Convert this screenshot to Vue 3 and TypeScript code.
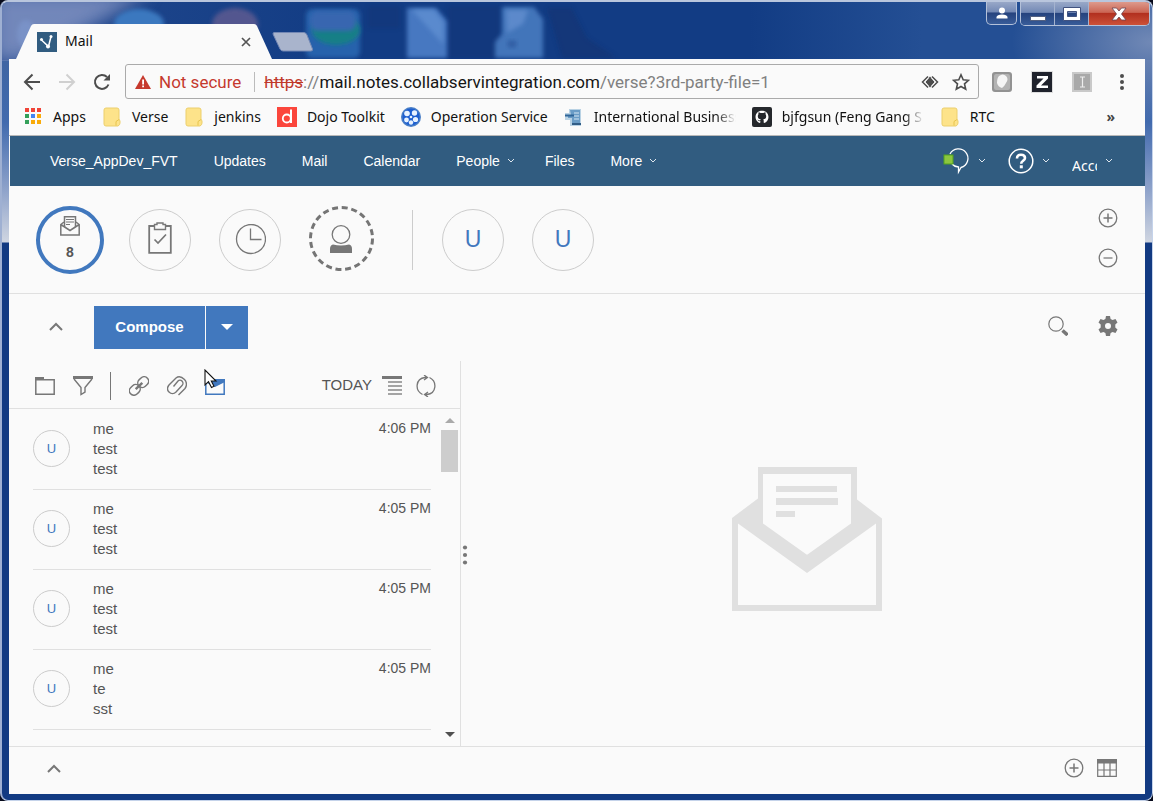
<script setup lang="ts">
interface Bookmark { label: string; icon: 'apps' | 'folder' | 'dojo' | 'reel' | 'server' | 'github'; faded?: boolean }
interface NavItem { label: string; menu?: boolean }
interface Message { id: number; sender: string; subject: string; snippet: string; time: string }

const bookmarks: Bookmark[] = [
  { label: 'Apps', icon: 'apps' },
  { label: 'Verse', icon: 'folder' },
  { label: 'jenkins', icon: 'folder' },
  { label: 'Dojo Toolkit', icon: 'dojo' },
  { label: 'Operation Service', icon: 'reel' },
  { label: 'International Business', icon: 'server', faded: true },
  { label: 'bjfgsun (Feng Gang S', icon: 'github', faded: true },
  { label: 'RTC', icon: 'folder' },
]
const appColors: string[] = ['#f04438', '#f04438', '#f04438', '#34a05a', '#4285f4', '#f9ab0a', '#34a05a', '#f9ab0a', '#f9ab0a']

const navItems: NavItem[] = [
  { label: 'Verse_AppDev_FVT' },
  { label: 'Updates' },
  { label: 'Mail' },
  { label: 'Calendar' },
  { label: 'People', menu: true },
  { label: 'Files' },
  { label: 'More', menu: true },
]

const messages: Message[] = [
  { id: 1, sender: 'me', subject: 'test', snippet: 'test', time: '4:06 PM' },
  { id: 2, sender: 'me', subject: 'test', snippet: 'test', time: '4:05 PM' },
  { id: 3, sender: 'me', subject: 'test', snippet: 'test', time: '4:05 PM' },
  { id: 4, sender: 'me', subject: 'te', snippet: 'sst', time: '4:05 PM' },
]
</script>

<template>
  <div class="window">
    <svg class="glass" width="740" height="59" viewBox="0 0 740 59" aria-hidden="true">
      <defs>
        <filter id="soft" x="-20%" y="-20%" width="140%" height="140%"><feGaussianBlur stdDeviation="2" /></filter>
        <filter id="softer" x="-40%" y="-40%" width="180%" height="180%"><feGaussianBlur stdDeviation="9" /></filter>
      </defs>
      <path d="M-10-10H150L80 30 20 59H-10z" fill="#8193c2" opacity=".85" filter="url(#softer)" />
      <ellipse cx="24" cy="32" rx="9" ry="14" fill="#7f9ad0" opacity=".6" filter="url(#soft)" />
      <ellipse cx="137" cy="22" rx="25" ry="15" fill="#3b78bf" filter="url(#soft)" />
      <ellipse cx="233" cy="22" rx="23" ry="16" fill="#53568f" filter="url(#soft)" />
      <rect x="304" y="7" width="54" height="49" rx="6" fill="#2862ac" filter="url(#soft)" />
      <ellipse cx="334" cy="28" rx="24" ry="15" fill="#167f86" filter="url(#soft)" />
      <rect x="308" y="9" width="46" height="20" rx="8" fill="#3766b0" filter="url(#soft)" />
      <path d="M366 4h32v22h-32zM446 4h52v52h-52z" fill="#17326f" opacity=".35" filter="url(#soft)" />
      <path d="M405 6h29l11 13v37h-40z" fill="#4678c1" filter="url(#soft)" />
      <path d="M410 8h22l9 12v22z" fill="#5a8ace" filter="url(#soft)" />
      <path d="M500 5h32l9 12v39h-48V40l7-8z" fill="#4274ba" filter="url(#soft)" />
      <path d="M504 8h22l-5 14-16 9z" fill="#5b89cb" filter="url(#soft)" />
      <ellipse cx="510" cy="42" rx="5" ry="4" fill="#315ea4" filter="url(#soft)" />
      <path d="M545 6h25l15 30 30 20h-55z" fill="#15306e" opacity=".5" filter="url(#soft)" />
    </svg>

    <header class="titlebar">
      <div class="tab">
        <svg class="tab-shape" viewBox="0 0 256 35" preserveAspectRatio="none" aria-hidden="true">
          <path d="M0 35 15 2Q16 0 18 0H238Q240 0 241 2L256 35z" fill="#fafafa" />
        </svg>
        <svg class="fav" width="20" height="20" viewBox="0 0 20 20" aria-hidden="true">
          <rect width="20" height="20" fill="#315c80" />
          <path d="M4.500 8 11.500 14.500 14 4.500" fill="none" stroke="#fff" stroke-width="1.500" />
          <circle cx="4.500" cy="7.500" r="1.500" fill="#fff" /><circle cx="11" cy="14.500" r="2" fill="#fff" /><circle cx="14" cy="4.500" r="1.500" fill="#fff" />
        </svg>
        <span class="tab-title">Mail</span>
        <button class="tab-close" aria-label="Close tab">
          <svg width="10" height="10" viewBox="0 0 10 10"><path d="M1 1l8 8M9 1 1 9" stroke="#555" stroke-width="1.700" /></svg>
        </button>
      </div>
      <button class="new-tab" aria-label="New tab">
        <svg width="42" height="20" viewBox="0 0 42 20"><path d="M2 .5H32Q34 .5 35 3L40.500 17Q41 19 39 19H11Q9 19 8 17L1 2Q1 .5 2 .5z" fill="#a9b4cc" stroke="#7488b4" stroke-width="1" /></svg>
      </button>
      <div class="caption">
        <button class="cap user" aria-label="Profile">
          <svg width="14" height="14" viewBox="0 0 14 14"><circle cx="7" cy="4.500" r="3" fill="#fff" /><path d="M1.500 12.500V11Q2 8.500 7 8.500T12.500 11v1.500z" fill="#fff" /></svg>
        </button>
        <div class="cap-group">
          <button class="cap min" aria-label="Minimize"><svg width="18" height="14" viewBox="0 0 18 14"><rect x="1.500" y="9.500" width="15" height="4" fill="#fff" stroke="#536080" /></svg></button>
          <button class="cap max" aria-label="Maximize"><svg width="18" height="14" viewBox="0 0 18 14"><path d="M.5 .5h17v13H.500zM4.500 4.500v5h9v-5z" fill="#fff" fill-rule="evenodd" stroke="#41527f" /></svg></button>
          <button class="cap close" aria-label="Close"><svg width="16" height="14" viewBox="0 0 16 14"><path d="M1 1h4.500L8 4l2.500-3H15l-4.500 6 4.500 6h-4.500L8 10l-2.500 3H1l4.500-6z" fill="#fff" stroke="#6b4450" stroke-width=".8" /></svg></button>
        </div>
      </div>
    </header>

    <div class="page">
      <div class="toolbar">
        <div class="history">
          <button aria-label="Back"><svg width="18" height="18" viewBox="0 0 18 18"><path d="M17 9H2.500M9.500 1.500 2 9l7.500 7.500" fill="none" stroke="#4d4d4d" stroke-width="2" /></svg></button>
          <button aria-label="Forward"><svg width="18" height="18" viewBox="0 0 18 18"><path d="M1 9h14.500M8.500 1.500 16 9l-7.500 7.500" fill="none" stroke="#d0d0d0" stroke-width="2" /></svg></button>
          <button aria-label="Reload"><svg width="18" height="18" viewBox="0 0 18 18"><path d="M15.500 11.500A7 7 0 1 1 14 4" fill="none" stroke="#4d4d4d" stroke-width="2" /><path d="M17 1v6.500H10.500z" fill="#4d4d4d" /></svg></button>
        </div>
        <div class="omnibox">
          <svg width="16" height="14" viewBox="0 0 16 14" aria-hidden="true"><path d="M8 0l8 14H0z" fill="#c6392d" /><path d="M7.200 4.500h1.800v5H7.200zM7.200 10.500h1.800v1.800H7.200z" fill="#fff" /></svg>
          <span class="insecure">Not secure</span>
          <div class="url" role="textbox" aria-label="Address" contenteditable="true" spellcheck="false"><s>https</s><i>://</i>mail.notes.collabservintegration.com<i>/verse?3rd-party-file=1</i></div>
          <button aria-label="Page info"><svg width="18" height="18" viewBox="0 0 18 18"><path d="M9 3.500 14 9l-5 5.500L4 9z" fill="#4d4d4d" /><path d="M7 3.500 1.500 9 7 14.500M11 3.500 16.500 9 11 14.500" fill="none" stroke="#4d4d4d" stroke-width="1.500" /><path d="M7.500 5 4 9l3.500 4M10.500 5 14 9l-3.500 4" fill="none" stroke="#fafafa" stroke-width=".9" /></svg></button>
          <button aria-label="Bookmark this page"><svg width="18" height="18" viewBox="0 0 18 18"><path d="M9 1.800l2.200 5 5.300.5-4 3.600 1.200 5.300L9 13.500l-4.700 2.700 1.200-5.300-4-3.600 5.300-.5z" fill="none" stroke="#4d4d4d" stroke-width="1.600" /></svg></button>
        </div>
        <div class="extensions">
          <button aria-label="Notes extension"><svg width="22" height="22" viewBox="0 0 22 22"><rect x="1" y="1" width="20" height="20" rx="3" fill="#929292" /><rect x="3" y="3" width="16" height="16" rx="2" fill="#b3b3b3" /><path d="M8 5Q12 2 15 5t0 7q-2 4-4 5-4-1-5-5 0-5 2-7z" fill="#f5f5f5" /></svg></button>
          <button aria-label="Z extension"><svg width="22" height="22" viewBox="0 0 22 22"><rect x=".5" y=".5" width="21" height="21" fill="#fafafa" stroke="#ddd" /><rect x="1" y="1" width="20" height="20" fill="#1f222c" /><path d="M6 5h11v2.500L10 14.500h7V17H5.500v-2.500l7-7H6z" fill="#fff" /></svg></button>
          <button aria-label="I extension"><svg width="22" height="22" viewBox="0 0 22 22"><rect x="1" y="1" width="20" height="20" fill="#c9c9c9" /><rect x="3" y="3" width="16" height="16" fill="#a9a9a9" /><path d="M9 6h5M9 16h5M11.500 6v10" stroke="#eee" stroke-width="1.200" /></svg></button>
          <button class="browser-menu" aria-label="Browser menu"><svg width="6" height="18" viewBox="0 0 6 18"><g fill="#4d4d4d"><circle cx="3" cy="3" r="2" /><circle cx="3" cy="9" r="2" /><circle cx="3" cy="15" r="2" /></g></svg></button>
        </div>
      </div>

      <nav class="bookmarks" aria-label="Bookmarks">
        <a v-for="b in bookmarks" :key="b.label" href="#" class="bookmark">
          <svg width="20" height="20" viewBox="0 0 20 20" aria-hidden="true">
            <template v-if="b.icon === 'apps'">
              <rect v-for="(c, i) in appColors" :key="i" :x="2 + (i % 3) * 6" :y="1 + Math.floor(i / 3) * 6" width="4" height="4" :fill="c" />
            </template>
            <template v-else-if="b.icon === 'folder'">
              <path d="M4 1h11q2 0 2 2v9l1 2v2q0 2-2 3H4q-2 0-2-2V3q0-2 2-2z" fill="#fde38a" stroke="#eccf6c" />
              <path d="M14 18.500v-4l3-2" fill="none" stroke="#e8c44c" />
            </template>
            <template v-else-if="b.icon === 'dojo'">
              <rect width="20" height="20" fill="#fb463c" />
              <path d="M14 2.500V16" stroke="#fff" stroke-width="2" /><circle cx="9.800" cy="11.500" r="4" fill="none" stroke="#fff" stroke-width="1.800" />
            </template>
            <template v-else-if="b.icon === 'reel'">
              <circle cx="10" cy="10" r="10" fill="#4a7fc6" /><circle cx="10" cy="10" r="8.500" fill="#1d5fd0" />
              <g fill="#e8f3ff"><circle cx="6" cy="6.500" r="2.800" /><circle cx="13.500" cy="6" r="2.700" /><circle cx="5.500" cy="13" r="2.400" /><circle cx="14.500" cy="12.500" r="2.600" /><circle cx="10" cy="15.500" r="2.200" /><circle cx="10" cy="10" r="1.300" /></g>
            </template>
            <template v-else-if="b.icon === 'server'">
              <path d="M5 2h12v17H6v-6H1V6h4z" fill="#b9d2e4" /><path d="M6 3h10v14H8v-6H4V8h3z" fill="#6a9cc6" />
              <path d="M10 6h5M10 9h5M10 12h5" stroke="#d4e6f3" /><path d="M1 8.500h9" stroke="#2f6598" stroke-width="2" /><path d="M8 17h9" stroke="#315d86" stroke-width="2" />
            </template>
            <template v-else>
              <rect width="20" height="20" rx="2" fill="#25282c" />
              <path d="M10 3.800C6.200 3.800 3.500 6.500 3.500 10c0 2.800 1.800 5.200 4.300 6.100.4 0 .5-.2.500-.5v-1.500c-2 .3-2.400-1-2.900-1.600 1 0 1.200 1.300 2.900.8 0-.5.300-.8.500-1-2-.3-3-1.200-3-3.100 0-.8.300-1.400.7-1.900-.2-.6-.1-1.300.1-2 .7 0 1.400.5 1.900.8h3c.5-.3 1.200-.8 1.900-.8.200.7.300 1.400.1 2 .4.500.7 1.100.7 1.900 0 1.900-1 2.800-3 3.100.3.200.5.600.5 1.300v2c0 .3.100.5.500.5 2.500-.9 4.300-3.300 4.300-6.100 0-3.500-2.700-6.200-6.500-6.200z" fill="#fff" />
            </template>
          </svg>
          <span :class="{ faded: b.faded }">{{ b.label }}</span>
        </a>
        <button class="overflow" aria-label="More bookmarks">»</button>
      </nav>

      <nav class="suite" aria-label="Suite">
        <a v-for="n in navItems" :key="n.label" href="#" :class="{ menu: n.menu }">{{ n.label }}<svg v-if="n.menu" class="caret" width="8" height="6" viewBox="0 0 8 6"><path d="M1 1l3 3 3-3" /></svg></a>
        <div class="suite-right">
          <button aria-label="Chat"><svg width="28" height="28" viewBox="0 0 28 28"><path d="M8 7A9.500 9.500 0 1 1 19 20.500L16.500 25V20Q12 19.500 10 17" fill="none" stroke="#fff" stroke-width="1.300" /><rect x="2" y="8" width="9" height="9" fill="#8cc63f" stroke="#52a31e" /></svg><svg class="caret" width="8" height="6" viewBox="0 0 8 6"><path d="M1 1l3 3 3-3" /></svg></button>
          <button aria-label="Help"><svg width="26" height="26" viewBox="0 0 26 26"><circle cx="13" cy="13" r="11.800" fill="none" stroke="#fff" stroke-width="1.500" /><path d="M9 10.500Q9 6.800 13 6.800T17 10Q17 11.800 14.800 13 13.200 14 13.200 15.800" fill="none" stroke="#fff" stroke-width="2.600" /><rect x="11.800" y="17.300" width="3" height="3" fill="#fff" /></svg><svg class="caret" width="8" height="6" viewBox="0 0 8 6"><path d="M1 1l3 3 3-3" /></svg></button>
          <button aria-label="Account"><span class="account">Acco</span><svg class="caret" width="8" height="6" viewBox="0 0 8 6"><path d="M1 1l3 3 3-3" /></svg></button>
        </div>
      </nav>

      <section class="people" aria-label="Shortcuts">
        <button class="slot" aria-label="Inbox, 8 unread">
          <span class="ring active">
            <svg width="20" height="20" viewBox="0 0 20 20"><path d="M4 6 .800 8.500V19h18.400V8.500L16 6M.8 8.500 10 14.500l9.200-6" fill="none" stroke="#777" stroke-width="1.500" /><path d="M4.500 11V.8h11V11" fill="none" stroke="#777" stroke-width="1.500" /><path d="M6 3.500h8M6 6h8M6 8.500h4" stroke="#777" /></svg>
            <b>8</b>
          </span>
        </button>
        <button class="slot" aria-label="Needs action">
          <span class="ring"><svg width="24" height="36" viewBox="0 0 24 36"><path d="M6 4H1.200v26.800h21.600V4H18" fill="none" stroke="#777" stroke-width="1.800" /><path d="M6.500 7.500v-5h2.500V1h6v1.500h2.500v5z" fill="none" stroke="#777" stroke-width="1.400" /><path d="M6.500 17.500 10 21 18 12.500" fill="none" stroke="#777" stroke-width="1.700" /></svg></span>
        </button>
        <button class="slot" aria-label="Waiting for">
          <span class="ring"><svg width="32" height="32" viewBox="0 0 32 32"><circle cx="17" cy="15" r="14.500" fill="none" stroke="#777" stroke-width="1.300" /><path d="M16.500 4.500v11h11" fill="none" stroke="#777" stroke-width="1.300" /></svg></span>
        </button>
        <button class="slot" aria-label="Suggested person">
          <svg width="70" height="68" viewBox="0 0 70 68"><circle cx="36.500" cy="32.500" r="31" fill="none" stroke="#757575" stroke-width="3" stroke-dasharray="6 3.738" /><circle cx="36" cy="28.500" r="8.800" fill="none" stroke="#777" stroke-width="1.300" /><path d="M25 47v-4q0-4 3-4.500 8 2 16 0 3 .5 3 4.500v4z" fill="#777" /></svg>
        </button>
        <span class="divider"></span>
        <button class="slot"><span class="ring letter">U</span></button>
        <button class="slot"><span class="ring letter">U</span></button>
        <div class="people-tools">
          <button aria-label="Add"><svg width="20" height="20" viewBox="0 0 20 20"><circle cx="10" cy="10" r="8.800" fill="none" stroke="#777" stroke-width="1.300" /><path d="M5.500 10h9M10 5.500v9" stroke="#777" stroke-width="1.500" /></svg></button>
          <button aria-label="Remove"><svg width="20" height="20" viewBox="0 0 20 20"><circle cx="10" cy="10" r="8.800" fill="none" stroke="#777" stroke-width="1.300" /><path d="M5.500 10h9" stroke="#999" stroke-width="1.700" /></svg></button>
        </div>
      </section>

      <div class="actions">
        <button class="collapse" aria-label="Collapse"><svg width="14" height="10" viewBox="0 0 14 10"><path d="M1 8l6-6 6 6" fill="none" stroke="#777" stroke-width="2" /></svg></button>
        <button class="compose">Compose</button>
        <button class="compose-more" aria-label="Compose options"><svg width="12" height="6" viewBox="0 0 12 6"><path d="M0 0h12L6 6z" fill="#fff" /></svg></button>
        <div class="action-tools">
          <button aria-label="Search"><svg width="20" height="20" viewBox="0 0 20 20"><circle cx="8" cy="8" r="7.200" fill="none" stroke="#777" stroke-width="1.200" /><path d="M14.500 14.500l5 4.500" stroke="#777" stroke-width="3.500" /></svg></button>
          <button aria-label="Settings"><svg width="20" height="20" viewBox="0 0 20 20"><path d="M8 0h4l.6 3 2 1L17.500 3l2 3.500L17.300 8.500v3l2.200 2-2 3.500-2.900-1-2 1L12 20H8l-.6-3-2-1L2.500 17l-2-3.500 2.200-2v-3L.5 6.500 2.500 3l2.900 1 2-1zM10 7a3 3 0 1 0 0 6 3 3 0 1 0 0-6z" fill="#777" fill-rule="evenodd" /></svg></button>
        </div>
      </div>

      <main class="mail">
        <section class="list-pane">
          <div class="list-tools">
            <button aria-label="Folders"><svg width="20" height="20" viewBox="0 0 20 20"><path d="M.8 3.800h18.400v14.400H.800z" fill="none" stroke="#777" stroke-width="1.500" /><path d="M0 1h9v3H0z" fill="#777" /></svg></button>
            <button aria-label="Filter"><svg width="20" height="20" viewBox="0 0 20 20"><path d="M0 0h20v3H0z" fill="#777" /><path d="M1 3l7 8.500v7l4-2.500v-4.500L19 3" fill="none" stroke="#777" stroke-width="1.400" /></svg></button>
            <span class="bar"></span>
            <button aria-label="Links"><svg width="20" height="20" viewBox="0 0 20 20"><g fill="none" stroke="#777" stroke-width="1.500" transform="rotate(-43 10 10)"><rect x="-1.500" y="5.500" width="11.500" height="9" rx="4.500" /><rect x="10" y="5.500" width="11.500" height="9" rx="4.500" /><path d="M5.500 10h9" stroke-width="2.500" /></g></svg></button>
            <button aria-label="Attachments"><svg width="20" height="20" viewBox="0 0 20 20"><path d="M11.500 19 18 12.500C20 10 20 6 17.500 3.500S11.500 0 9 2L2 9C0 11.500 0 14 2 16s5 2 7 0l6-6.500c1.500-1.500 1-3.500 0-4.500s-3-1-4 0L6.500 10.500" fill="none" stroke="#777" stroke-width="1.400" /></svg></button>
            <button class="unread" aria-label="Unread"><svg width="20" height="20" viewBox="0 0 20 20"><path d="M.8 3.800h18.400v14.400H.800z" fill="#fafafa" stroke="#4178be" stroke-width="1.500" /><path d="M0 3h20v3L10 11 0 6z" fill="#4178be" /></svg>
              <svg class="pointer" width="14" height="20" viewBox="0 0 14 20"><path d="M1 1v15l3.500-3.300L7.500 18.500l2.500-1.200-2.700-5.300H12z" fill="#fff" stroke="#111" stroke-width="1.100" /></svg>
            </button>
            <button class="today">TODAY</button>
            <button aria-label="List density"><svg width="20" height="20" viewBox="0 0 20 20"><path d="M0 0h20v3H0z" fill="#777" /><path d="M6 6h14M6 10h14M6 14h14M6 18h14" stroke="#888" stroke-width="1.500" /></svg></button>
            <button aria-label="Refresh"><svg width="20" height="22" viewBox="0 0 20 22"><path d="M6.500 19.500C-1.500 15.500-.5 3.500 9 2.500h2M13.500 2.500C21.500 6.500 20.500 18.500 11 19.500H9M8 0l3.500 2.500L8 5M12 17l-3.500 2.500L12 22" fill="none" stroke="#777" stroke-width="1.300" /></svg></button>
          </div>
          <div class="list-body">
            <ul>
              <li v-for="m in messages" :key="m.id">
                <span class="avatar">U</span>
                <div class="text"><div>{{ m.sender }}</div><div>{{ m.subject }}</div><div>{{ m.snippet }}</div></div>
                <time>{{ m.time }}</time>
              </li>
            </ul>
            <div class="scroll" aria-hidden="true">
              <svg width="10" height="5" viewBox="0 0 10 5"><path d="M0 5h10L5 0z" fill="#aaa" /></svg>
              <span class="thumb"></span>
              <svg class="down" width="10" height="5" viewBox="0 0 10 5"><path d="M0 0h10L5 5z" fill="#505050" /></svg>
            </div>
          </div>
        </section>
        <div class="splitter" aria-hidden="true"><svg width="6" height="20" viewBox="0 0 6 20"><g fill="#777"><circle cx="3" cy="2.500" r="2.100" /><circle cx="3" cy="10" r="2.100" /><circle cx="3" cy="17.500" r="2.100" /></g></svg></div>
        <section class="preview" aria-label="No message selected">
          <svg width="150" height="144" viewBox="0 0 150 144"><path d="M26 0h99v32.500l25 19V144H0V51l26-19.500z" fill="#e0e0e0" /><path d="M31 7h88v49.500L75.500 87.500h-1L31 56.500z" fill="#fafafa" /><path d="M6 56.500 75 106l69-49.500V138H6z" fill="#fafafa" /><path d="M44 19h61v6H44zM44 31h62v7H44zM44 44h19v6H44z" fill="#e0e0e0" /></svg>
        </section>
      </main>

      <footer class="dock">
        <button aria-label="Expand"><svg width="14" height="10" viewBox="0 0 14 10"><path d="M1 8l6-6 6 6" fill="none" stroke="#777" stroke-width="2" /></svg></button>
        <div class="dock-tools">
          <button aria-label="New event"><svg width="20" height="20" viewBox="0 0 20 20"><circle cx="10" cy="10" r="8.800" fill="none" stroke="#777" stroke-width="1.300" /><path d="M5.500 10h9M10 5.500v9" stroke="#777" stroke-width="1.500" /></svg></button>
          <button aria-label="Calendar"><svg width="20" height="18" viewBox="0 0 20 18"><path d="M0 0h20v4.500H0z" fill="#777" /><path d="M.7 4v13.300h18.600V4M7 4v13M13 4v13M1 11h18" fill="none" stroke="#777" stroke-width="1.200" /></svg></button>
        </div>
      </footer>
    </div>
  </div>
</template>

<style>
body { margin: 0; background: #06091a; }
</style>

<style scoped>
* { box-sizing: border-box; }
button { border: 0; padding: 0; background: none; color: inherit; font: inherit; display: flex; align-items: center; justify-content: center; flex: none; }
svg { display: block; flex: none; }
a { color: inherit; text-decoration: none; }
.window {
  position: relative; display: flex; flex-direction: column; min-height: 100vh; padding: 0 7px 6px;
  border: 1px solid #c5d3ea; border-left: 2px solid #9fb0d2; border-top: 2px solid #b9c6dd; border-radius: 8px; overflow: hidden;
  background:
    radial-gradient(ellipse 140px 80px at 100% 40px, #7189b6, transparent) no-repeat,
    linear-gradient(90deg, #23498e 0, #123c84 30%, #123c84 65%, #244f94 80%, #244f94 100%) 0 0 / 100% 58px no-repeat,
    linear-gradient(#3f65a3 60px, #416aae 120px, #8ba0c9 185px, #cfd5e1 240px, #123a82 241px);
  font-family: "Liberation Sans", Arial, sans-serif; font-size: 15px; color: #555;
}
.glass { position: absolute; left: 0; top: 0; }
.titlebar { position: relative; display: flex; align-items: flex-start; height: 57px; }
.tab { position: relative; display: flex; align-items: center; width: 256px; height: 35px; margin: 22px 0 0 7px; padding: 0 21px; }
.tab-shape { position: absolute; left: 0; top: 0; width: 100%; height: 100%; }
.fav, .tab-title, .tab-close { position: relative; }
.tab-title { flex: 1; margin-left: 8px; padding-bottom: 2px; font: 14px/20px "Noto Sans", sans-serif; color: #111; }
.new-tab { margin: 30px 0 0 0; }
.caption { display: flex; gap: 3px; margin-left: auto; margin-right: -5px; }
.cap { height: 23px; background: linear-gradient(#98a8c8 0, #7389b5 45%, #26437e 50%, #385c99); }
.user { width: 31px; border: 1px solid #b4c1d9; border-top: 0; border-radius: 0 0 5px 5px; }
.cap-group { display: flex; border: 1px solid #b4c1d9; border-top: 0; border-radius: 0 0 5px 5px; overflow: hidden; }
.cap-group .cap { width: 34px; border-right: 1px solid #a5b3cf; }
.cap-group .close { width: 60px; border: 0; background: linear-gradient(#dd9a8c 0, #cb6553 45%, #b2301f 50%, #cc5138); }
.page { flex: 1; display: flex; flex-direction: column; position: relative; background: #fafafa; }
.toolbar { display: flex; align-items: center; padding: 5px 20px 0 14px; height: 40px; }
.history { display: flex; gap: 17px; margin-right: 14px; }
.omnibox { flex: 1; display: flex; align-items: center; height: 35px; padding: 0 8px 0 9px; border: 1px solid #aaa; border-radius: 3px; font: 17px/24px Roboto, sans-serif; color: #151515; white-space: nowrap; }
.insecure { margin: 0 13px 0 8px; color: #c5392e; }
.url { flex: 1; padding-left: 9px; border-left: 1px solid #bbb; line-height: 20px; outline: 0; }
.url s { color: #c0392b; }
.url i { font-style: normal; color: #808080; }
.omnibox button { margin-left: 13px; }
.extensions { display: flex; align-items: center; gap: 18px; margin-left: 12px; }
.browser-menu { margin-left: 8px; }
.bookmarks { display: flex; align-items: center; gap: 16px; height: 37px; padding: 0 30px 0 14px; font: 14px/20px "Noto Sans", sans-serif; color: #111; border-bottom: 1px solid #b8b8b8; }
.bookmark { display: flex; align-items: center; gap: 10px; white-space: nowrap; }
.faded { width: 142px; -webkit-mask-image: linear-gradient(90deg, #000 122px, transparent); mask-image: linear-gradient(90deg, #000 122px, transparent); }
.overflow { margin-left: auto; font-weight: bold; color: #444; }
.suite { display: flex; align-items: center; gap: 36px; height: 50px; margin-left: 1px; padding: 0 32px 0 40px; background: #315c80; color: #fff; font-size: 14px; }
.suite a, .suite-right button { display: flex; align-items: center; gap: 7px; }
.menu { margin-right: -6px; }
.caret path { fill: none; stroke: #dfe7ee; stroke-width: 1; }
.suite-right { display: flex; align-items: center; gap: 22px; margin-left: auto; }
.suite-right button { gap: 8px; }
.account { width: 25px; padding-top: 9px; overflow: hidden; font: 14px/16px "Noto Sans", sans-serif; text-align: left; }
.people { display: flex; align-items: center; height: 108px; padding: 0 27px 0 16px; border-bottom: 1px solid #e0e0e0; }
.slot { width: 90px; }
.ring { display: flex; flex-direction: column; align-items: center; justify-content: center; width: 62px; height: 62px; border: 1px solid #ccc; border-radius: 50%; }
.active { width: 68px; height: 68px; padding-bottom: 4px; border: 4px solid #4178be; gap: 8px; color: #555; font-size: 14px; line-height: 16px; }
.letter { padding-bottom: 2px; font-size: 23px; line-height: 26px; color: #4178be; }
.divider { width: 1px; height: 60px; margin: 0 15px 0 27px; background: #ccc; }
.people-tools { display: flex; flex-direction: column; gap: 20px; margin-left: auto; padding-bottom: 4px; }
.actions { display: flex; align-items: center; height: 67px; padding: 0 27px 0 40px; }
.collapse { margin-right: 31px; padding-bottom: 2px; }
.compose, .compose-more { height: 43px; padding-bottom: 2px; background: #4178be; color: #fff; font-weight: bold; }
.compose { width: 111px; margin-right: 1px; }
.compose-more { width: 42px; }
.action-tools { display: flex; gap: 30px; margin-left: auto; padding-bottom: 4px; }
.mail { flex: 1; display: flex; }
.list-pane { display: flex; flex-direction: column; width: 452px; border-right: 1px solid #e0e0e0; }
.list-tools { display: flex; align-items: center; gap: 18px; height: 48px; padding: 2px 24px 0 26px; border-bottom: 1px solid #e0e0e0; }
.bar { width: 1px; height: 28px; margin-left: -1px; background: #777; }
.unread { position: relative; }
.pointer { position: absolute; left: -10px; top: -7px; }
.unread .pointer { left: -1px; }
.today { margin: 0 -8px 0 auto; padding-bottom: 2px; }
.list-tools button:last-child { margin-left: -4px; }
.list-body { flex: 1; display: flex; }
ul { flex: 1; margin: 0 10px 0 24px; padding: 0; list-style: none; }
li { display: flex; align-items: flex-start; height: 80px; padding-top: 9px; margin-top: 1px; border-bottom: 1px solid #e0e0e0; }
li + li { margin-top: 0; }
.avatar { display: flex; align-items: center; justify-content: center; width: 37px; height: 37px; margin-top: 11px; border: 1px solid #ccc; border-radius: 50%; font-size: 13px; color: #4178be; }
.text { flex: 1; margin-left: 23px; line-height: 20px; }
time { font-size: 14px; line-height: 18px; }
.scroll { display: flex; flex-direction: column; align-items: center; width: 17px; margin-right: 2px; padding: 9px 0; }
.thumb { width: 17px; height: 42px; margin-top: 7px; background: #cdcdcd; }
.down { margin-top: auto; }
.splitter { display: flex; align-items: center; justify-content: center; width: 8px; padding-top: 2px; }
.preview { flex: 1; display: flex; align-items: center; justify-content: center; padding-bottom: 29px; }
.dock { display: flex; align-items: center; height: 48px; padding: 0 28px 4px 38px; border-top: 1px solid #e0e0e0; }
.dock-tools { display: flex; align-items: center; gap: 13px; margin-left: auto; padding-bottom: 2px; }
</style>
